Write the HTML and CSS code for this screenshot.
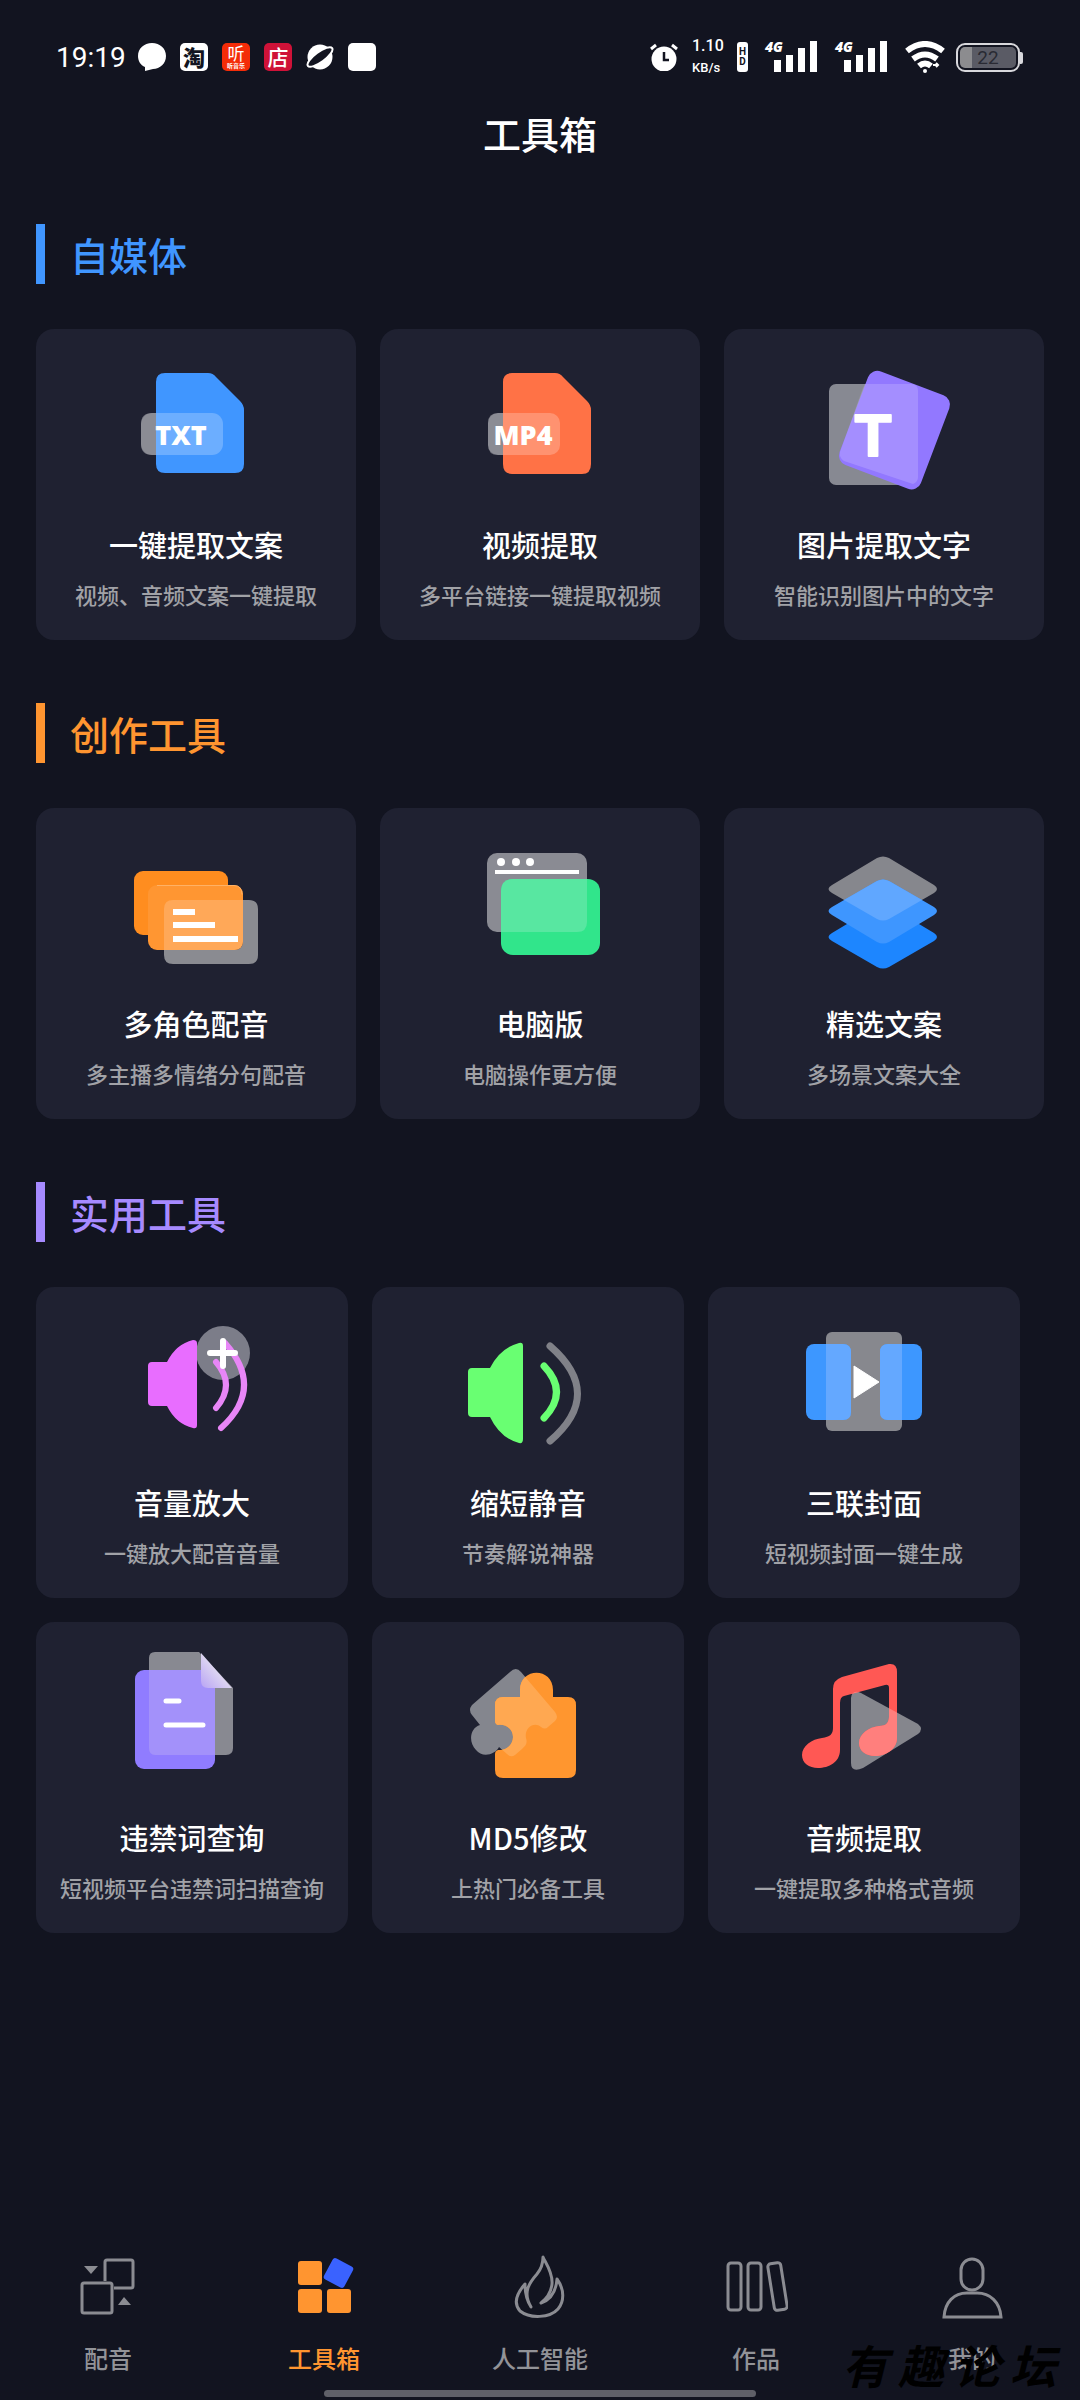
FILE: index.html
```html
<!DOCTYPE html>
<html lang="zh-CN">
<head>
    <meta charset="utf-8">
    <meta name="viewport" content="width=device-width, initial-scale=1">
    <title>工具箱</title>
    <link rel="stylesheet" href="styles.css">
</head>
<body>
    <div class="status-bar">
        <div class="status-left">
            <span class="clock">19:19</span>
            <svg class="app-icon" viewBox="0 0 28 28"><path d="M14 0c8 0 14 5.500 14 13s-6 13-13 13l-8 2v-4C2.500 22 0 18 0 13 0 5.500 6 0 14 0z" fill="#fff"/></svg>
            <span class="app-icon app-tao">淘</span>
            <span class="app-icon app-ting">听<small>听音乐</small></span>
            <span class="app-icon app-dian">店</span>
            <svg class="app-icon" viewBox="0 0 28 28">
                <circle cx="14" cy="14" r="12.500" fill="#fff"/>
                <ellipse cx="14" cy="14" rx="15" ry="5" transform="rotate(-36 14 14)" fill="#121420" stroke="#fff" stroke-width="2"/>
            </svg>
            <span class="app-icon app-blank"></span>
        </div>
        <div class="status-right">
            <svg class="alarm" width="28" height="28" viewBox="0 0 28 28">
                <circle cx="14" cy="16" r="12.500" fill="#fff"/>
                <path d="M1 6l5-4M27 6l-5-4" stroke="#fff" stroke-width="3"/>
                <path d="M14 9v8h5" fill="none" stroke="#121420" stroke-width="2.500"/>
            </svg>
            <div class="speed"><span>1.10</span><span class="unit">KB/s</span></div>
            <div class="hd"><span>H</span><span>D</span></div>
            <div class="signal">
                <span>4G</span>
                <svg width="44" height="32" viewBox="0 0 44 32" fill="#fff"><path d="M0 19h7v12H0zM12 14h7v17h-7zM24 7h7v24h-7zM36 0h7v31h-7z"/></svg>
            </div>
            <div class="signal">
                <span>4G</span>
                <svg width="44" height="32" viewBox="0 0 44 32" fill="#fff"><path d="M0 19h7v12H0zM12 14h7v17h-7zM24 7h7v24h-7zM36 0h7v31h-7z"/></svg>
            </div>
            <svg class="wifi" width="40" height="32" viewBox="0 0 40 32" fill="none" stroke="#fff" stroke-width="6">
                <path d="M2 10Q20-4 38 10M8 18q12-9 24 0M14 25q6-5 12 0"/>
                <circle cx="20" cy="30" r="2" fill="#fff" stroke="none"/>
                <path d="M28 24h5m-2-2 2 2-2 2" stroke-width="2"/>
            </svg>
            <div class="battery"><span>22</span></div>
        </div>
    </div>

    <header class="title-bar"><h1>工具箱</h1></header>

    <main>
        <section>
            <h2 class="blue">自媒体</h2>
            <div class="cards">
                <a class="card" href="#">
                    <svg class="icon" viewBox="0 0 160 150">
                        <path d="M49 20h43q5 0 8 4l24 24q4 4 4 9v54q0 9-9 9H49q-9 0-9-9V29q0-9 9-9z" fill="#4096ff"/>
                        <rect x="25" y="60" width="82" height="42" rx="11" fill="#fff" opacity=".23"/>
                        <path d="M40 60v42h-4q-11 0-11-11V71q0-11 11-11z" fill="#fff" opacity=".33"/>
                        <text class="file-type" x="65" y="92">TXT</text>
                    </svg>
                    <h3>一键提取文案</h3>
                    <p>视频、音频文案一键提取</p>
                </a>
                <a class="card" href="#">
                    <svg class="icon" viewBox="0 0 160 150">
                        <path d="M52 20h43q5 0 8 4l24 24q4 4 4 9v54q0 10-9 10H52q-9 0-9-10V29q0-9 9-9z" fill="#ff7246"/>
                        <rect x="28" y="60" width="72" height="42" rx="10" fill="#fff" opacity=".23"/>
                        <path d="M43 60v42h-5q-10 0-10-10V70q0-10 10-10z" fill="#fff" opacity=".33"/>
                        <text class="file-type" x="63" y="92">MP4</text>
                    </svg>
                    <h3>视频提取</h3>
                    <p>多平台链接一键提取视频</p>
                </a>
                <a class="card" href="#">
                    <svg class="icon" viewBox="0 0 160 150">
                        <rect x="25" y="31" width="89" height="101" rx="7" fill="#878992"/>
                        <rect x="47" y="27" width="87" height="100" rx="10" transform="rotate(20.800 90 77)" fill="#9278ff"/>
                        <path d="M61 31h46q7 0 7 7v86q0 5-5 7L40 108q-5-3-4-9L59 35z" fill="#fff" opacity=".17"/>
                        <text class="letter" x="69" y="103">T</text>
                    </svg>
                    <h3>图片提取文字</h3>
                    <p>智能识别图片中的文字</p>
                </a>
            </div>
        </section>

        <section>
            <h2 class="orange">创作工具</h2>
            <div class="cards">
                <a class="card" href="#">
                    <svg class="icon" viewBox="0 0 160 150">
                        <rect x="18" y="39" width="94" height="64" rx="9" fill="#ff8d1f"/>
                        <rect x="32" y="53" width="95" height="65" rx="9" fill="#ff9632"/>
                        <path d="M41 53.500h77q8 0 8 9" fill="none" stroke="#ffb165"/>
                        <path d="M127 68h6q9 0 9 9v46q0 9-9 9H57q-9 0-9-9v-5h70q9 0 9-9z" fill="#8a8b91"/>
                        <path d="M57 68h70v41q0 9-9 9H48V77q0-9 9-9z" fill="#ffa858"/>
                        <path d="M57 80h22M57 93h42M57 107h65" stroke="#fff" stroke-width="6"/>
                    </svg>
                    <h3>多角色配音</h3>
                    <p>多主播多情绪分句配音</p>
                </a>
                <a class="card" href="#">
                    <svg class="icon" viewBox="0 0 160 150">
                        <rect x="27" y="21" width="100" height="79" rx="10" fill="#8a8b93"/>
                        <g fill="#fff"><circle cx="41" cy="30" r="4"/><circle cx="56" cy="30" r="4"/><circle cx="70" cy="30" r="4"/></g>
                        <path d="M35 40h84" stroke="#fff" stroke-width="4"/>
                        <rect x="41" y="47" width="99" height="76" rx="12" fill="#31e58b"/>
                        <path d="M53 47h74v43q0 10-10 10H41V59q0-12 12-12z" fill="#58e7a1"/>
                    </svg>
                    <h3>电脑版</h3>
                    <p>电脑操作更方便</p>
                </a>
                <a class="card" href="#">
                    <svg class="icon" viewBox="0 0 160 150">
                        <path d="M73 74q6-3 12 0l45 27q6 4 0 8l-45 26q-6 3-12 0l-45-26q-7-4 0-8z" fill="#1d86ff"/>
                        <path d="M73 26q6-3 12 0l45 27q6 4 0 8L85 87q-6 3-12 0L28 61q-7-4 0-8z" fill="#86878d"/>
                        <path d="M73 49q6-3 12 0l45 26q6 4 0 8l-45 27q-6 3-12 0L28 83q-7-4 0-8z" fill="#3e96ff"/>
                        <path d="M73 49q6-3 12 0l33 19-33 19q-6 3-12 0L40 68z" fill="#60a7ff"/>
                    </svg>
                    <h3>精选文案</h3>
                    <p>多场景文案大全</p>
                </a>
            </div>
        </section>

        <section>
            <h2 class="purple">实用工具</h2>
            <div class="cards narrow">
                <a class="card" href="#">
                    <svg class="icon" viewBox="0 0 160 150">
                        <circle cx="111" cy="42" r="27" fill="#7c7d89"/>
                        <path d="M40 51h15q9-18 26-22 4 0 4 3v82q0 4-4 3-17-4-26-22H40q-4 0-4-4V55q0-4 4-4z" fill="#e86dff"/>
                        <path d="M104 51q20 23 0 46M113 32q40 45-4 85" fill="none" stroke="#e886f7" stroke-width="6" stroke-linecap="round"/>
                        <path d="M98 42h25M111 30v25" stroke="#fff" stroke-width="6" stroke-linecap="round"/>
                    </svg>
                    <h3>音量放大</h3>
                    <p>一键放大配音音量</p>
                </a>
                <a class="card" href="#">
                    <svg class="icon" viewBox="0 0 160 150">
                        <path d="M24 57h18q10-20 29-25 4-1 4 3v93q0 5-4 4-19-5-29-26H24q-4 0-4-4V61q0-4 4-4z" fill="#69ff72"/>
                        <path d="M96 55q25 26 0 52" fill="none" stroke="#69ff72" stroke-width="7" stroke-linecap="round"/>
                        <path d="M102 35q55 48 0 95" fill="none" stroke="#808188" stroke-width="7" stroke-linecap="round"/>
                    </svg>
                    <h3>缩短静音</h3>
                    <p>节奏解说神器</p>
                </a>
                <a class="card" href="#">
                    <svg class="icon" viewBox="0 0 160 150">
                        <rect x="42" y="21" width="76" height="99" rx="6" fill="#87888e"/>
                        <rect x="22" y="33" width="45" height="76" rx="8" fill="#3d97ff"/>
                        <rect x="96" y="33" width="42" height="76" rx="8" fill="#3d97ff"/>
                        <path d="M42 33h17q8 0 8 8v60q0 8-8 8H42zM118 33h-14q-8 0-8 8v60q0 8 8 8h14z" fill="#64a8ff"/>
                        <path d="M70 55l25 16-25 16z" fill="#fff" stroke="#fff" stroke-linejoin="round"/>
                    </svg>
                    <h3>三联封面</h3>
                    <p>短视频封面一键生成</p>
                </a>
                <a class="card" href="#">
                    <svg class="icon" viewBox="0 0 160 150">
                        <defs>
                            <linearGradient id="fold" x1="1" y1="0" x2="0" y2="1"><stop offset=".4" stop-color="#e4dff0"/><stop offset="1" stop-color="#b8a3f5"/></linearGradient>
                        </defs>
                        <path d="M43 6h44l34 36v60q0 7-7 7H43q-6 0-6-7V12q0-6 6-6z" fill="#888991"/>
                        <rect x="23" y="24" width="80" height="99" rx="9" fill="#907cff"/>
                        <path d="M37 24h57q9 0 9 9v76H43q-6 0-6-7z" fill="#a391fa"/>
                        <path d="M89 7l31 35H96q-7 0-7-7z" fill="url(#fold)"/>
                        <path d="M54 55h13M54 79h37" stroke="#fff" stroke-width="5" stroke-linecap="round"/>
                    </svg>
                    <h3>违禁词查询</h3>
                    <p>短视频平台违禁词扫描查询</p>
                </a>
                <a class="card" href="#">
                    <svg class="icon" viewBox="0 0 160 150">
                        <defs>
                            <clipPath id="piece"><path d="M55 51h17V44C72 21 105 21 105 44v7h15q8 0 8 8v65q0 8-8 8H55q-8 0-8-8v-16q0-3 3-4c8 1 15-5 15-13s-7-13-15-12q-3-1-3-4V59q0-8 8-8z"/></clipPath>
                            <path id="tilted" d="M62 26q6-6 11 0l34 40q4 5 0 9l-7 6q-3 3-7 0c-7-6-17 1-15 11 2 6-1 8-4 11l-7 6q-4 3-8-1l-8-7c-4 8-17 11-23 3-8-8-6-22 4-25l-8-10q-4-5 0-10z"/>
                        </defs>
                        <use href="#tilted" fill="#84868e"/>
                        <g clip-path="url(#piece)">
                            <path d="M40 20h95v120H40z" fill="#ff962f"/>
                            <use href="#tilted" fill="#ffa851"/>
                        </g>
                    </svg>
                    <h3>MD5修改</h3>
                    <p>上热门必备工具</p>
                </a>
                <a class="card" href="#">
                    <svg class="icon" viewBox="0 0 160 150">
                        <defs>
                            <path id="play" d="M77 47l57 31q6 5 0 10l-55 34q-12 5-12-5V52q1-9 10-5z"/>
                            <clipPath id="play-clip"><use href="#play"/></clipPath>
                            <path id="note" d="M105 18q8-1 8 8v66c0 11-11 18-22 18-9 0-16-5-16-13 0-9 10-16 20-17 8 0 10-4 10-10V42q0-4-4-3L60 50q-4 1-4 7v47c0 12-11 18-22 18-9 0-16-5-16-13 0-9 10-16 20-17 8-1 11-4 11-10V43q0-9 9-12z"/>
                        </defs>
                        <use href="#play" fill="#85868d"/>
                        <use href="#note" fill="#ff5854"/>
                        <use href="#note" fill="#ff7f7d" clip-path="url(#play-clip)"/>
                    </svg>
                    <h3>音频提取</h3>
                    <p>一键提取多种格式音频</p>
                </a>
            </div>
        </section>
    </main>

    <nav class="tabs">
        <a href="#">
            <svg class="tab-icon" viewBox="0 0 64 66">
                <g fill="none" stroke="#8b8c92" stroke-width="3"><path d="M29 27V8q0-2 2-2h24q2 0 2 2v24q0 2-2 2H38"/><rect x="6" y="29" width="30" height="30" rx="2"/></g>
                <path d="M8 12h14l-7 8zM42 51h13l-7-8z" fill="#8b8c92"/>
            </svg>
            配音
        </a>
        <a class="active" href="#">
            <svg class="tab-icon" viewBox="0 0 64 66">
                <g fill="#ff9530"><rect x="6" y="7" width="24" height="24" rx="3"/><rect x="6" y="35" width="24" height="24" rx="3"/><rect x="35" y="35" width="24" height="24" rx="3"/></g>
                <rect x="35" y="7" width="23" height="24" rx="3" transform="rotate(28 46.500 19)" fill="#3a62ff"/>
            </svg>
            工具箱
        </a>
        <a href="#">
            <svg class="tab-icon" viewBox="0 0 64 66" fill="none" stroke="#8b8c92" stroke-width="3" stroke-linejoin="round">
                <path d="M23 53C14 38 22 28 29 20c5-6 6-12 6-17 2 5 10 15 9 27-1 10-6 15-11 19 9-3 15-11 16-24 8 11 7 23 1 30-8 9-28 10-38 2-8-9-2-19 5-27 0 10 2 17 6 23z"/>
            </svg>
            人工智能
        </a>
        <a href="#">
            <svg class="tab-icon" viewBox="0 0 64 66" fill="none" stroke="#8b8c92" stroke-width="3">
                <rect x="4" y="9" width="13" height="47" rx="3"/>
                <rect x="24" y="9" width="13" height="47" rx="3"/>
                <rect x="47" y="9" width="13" height="47" rx="3" transform="rotate(-9 53.500 32.500)"/>
            </svg>
            作品
        </a>
        <a href="#">
            <svg class="tab-icon" viewBox="0 0 64 66" fill="none" stroke="#8b8c92" stroke-width="3">
                <rect x="21" y="5" width="22" height="31" rx="11"/>
                <path d="M4 63C5 48 14 39 27 39h10c13 0 23 9 24 24z"/>
            </svg>
            我的
        </a>
    </nav>
    <div class="home-indicator"></div>
    <div class="watermark"><span>有</span><span>趣</span><span>论</span><span>坛</span></div>
</body>
</html>
```
FILE: styles.css
```css
* {
    box-sizing: border-box;
}

body {
    position: relative;
    display: flex;
    flex-direction: column;
    min-height: 100vh;
    margin: 0;
    background-color: #121420;
    color: #fff;
    font-family: "Noto Sans CJK SC", sans-serif;
}

h1, h2, h3, p {
    margin: 0;
    font-weight: 500;
}

a {
    color: inherit;
    text-decoration: none;
}

svg {
    display: block;
    flex-shrink: 0;
}

/* status bar */
.status-bar {
    display: flex;
    justify-content: space-between;
    align-items: center;
    height: 90px;
    padding: 24px 60px 0 56px;
}

.status-left,
.status-right {
    display: flex;
    align-items: center;
}

.status-left {
    gap: 14px;
}

.clock {
    width: 68px;
    font-family: Roboto, sans-serif;
    font-size: 28px;
}

.app-icon {
    width: 28px;
    height: 28px;
    border-radius: 5px;
    text-align: center;
}

.app-tao {
    background-color: #fff;
    color: #121420;
    font-size: 22px;
    font-weight: 900;
    line-height: 27px;
}

.app-ting {
    background-color: #f42c08;
    font-size: 17px;
    line-height: 19px;
}

.app-ting small {
    display: block;
    font-size: 6px;
    font-weight: 700;
    line-height: 8px;
}

.app-dian {
    background-color: #cf1238;
    font-size: 21px;
    font-weight: 500;
    line-height: 26px;
}

.app-blank {
    background-color: #fff;
}

.speed {
    display: flex;
    flex-direction: column;
    gap: 6px;
    width: 30px;
    margin-left: 14px;
    font-family: Roboto, sans-serif;
    font-size: 16px;
    font-weight: 500;
    line-height: 16px;
}

.speed .unit {
    font-size: 13px;
}

.hd {
    display: flex;
    flex-direction: column;
    align-items: center;
    width: 11px;
    padding: 5px 0;
    margin: 0 17px 0 15px;
    border-radius: 3px;
    background-color: #fff;
    color: #121420;
    font-family: Roboto, sans-serif;
    font-size: 10px;
    font-weight: 700;
    line-height: 10px;
}

.signal {
    position: relative;
    padding-left: 9px;
    margin-right: 17px;
}

.signal span {
    position: absolute;
    left: 0;
    top: 0;
    font-family: "Open Sans", sans-serif;
    font-size: 14px;
    font-weight: 800;
    font-style: italic;
    line-height: 12px;
}

.wifi {
    margin-right: 11px;
}

.battery {
    position: relative;
    width: 64px;
    height: 29px;
    border: 2px solid #d8d8dc;
    border-radius: 9px;
    background: linear-gradient(to right, #8c8c8f 22%, #5a5b65 22%) content-box;
    padding: 2px;
    color: #292a33;
    font-family: Roboto, sans-serif;
    font-size: 19px;
    line-height: 22px;
    text-align: center;
}

.battery::after {
    content: "";
    position: absolute;
    right: -5px;
    top: 7px;
    width: 3px;
    height: 12px;
    border-radius: 0 2px 2px 0;
    background-color: #d8d8dc;
}

/* page */
.title-bar {
    height: 90px;
}

.title-bar h1 {
    font-size: 38px;
    line-height: 86px;
    text-align: center;
}

main {
    flex: 1;
    padding: 44px 36px 0;
}

section {
    margin-bottom: 63px;
}

h2 {
    height: 60px;
    padding-left: 25px;
    margin-bottom: 45px;
    border-left: 9px solid;
    font-size: 39px;
    line-height: 60px;
}

.blue {
    color: #4096ff;
}

.orange {
    color: #ff9530;
}

.purple {
    color: #a68aff;
}

.cards {
    display: grid;
    grid-template-columns: repeat(3, 1fr);
    gap: 24px;
}

.narrow {
    margin-right: 24px;
}

.card {
    display: flex;
    flex-direction: column;
    align-items: center;
    padding: 24px 0 30px;
    border-radius: 18px;
    background-color: #1f2131;
}

.icon {
    width: 160px;
    height: 150px;
}

.card h3 {
    margin: 20px 0 13px;
    font-size: 29px;
    line-height: 42px;
}

.card p {
    color: #a1a2a7;
    font-size: 22px;
    line-height: 32px;
    white-space: nowrap;
}

.file-type,
.letter {
    fill: #fff;
    font-weight: 800;
    text-anchor: middle;
}

.file-type {
    font-family: "Open Sans", sans-serif;
    font-size: 27px;
}

.letter {
    font-family: "Liberation Sans", sans-serif;
    font-size: 60px;
    stroke: #fff;
    stroke-width: 2px;
    stroke-linejoin: round;
}

/* bottom tabs */
.tabs {
    display: flex;
}

.tabs a {
    flex: 1;
    display: flex;
    flex-direction: column;
    align-items: center;
    gap: 22px;
    color: #929398;
    font-size: 24px;
    font-weight: 500;
    line-height: 32px;
}

.tabs .active {
    color: #ff9530;
}

.tab-icon {
    width: 64px;
    height: 66px;
}

.home-indicator {
    width: 40%;
    height: 7px;
    margin: 16px auto 3px;
    border-radius: 4px;
    background-color: #5f6068;
}

.watermark {
    position: absolute;
    right: 24px;
    bottom: 10px;
    display: flex;
    gap: 10px;
    color: #000;
    font-size: 46px;
    font-style: italic;
    font-weight: 700;
    line-height: 52px;
    pointer-events: none;
}
```
